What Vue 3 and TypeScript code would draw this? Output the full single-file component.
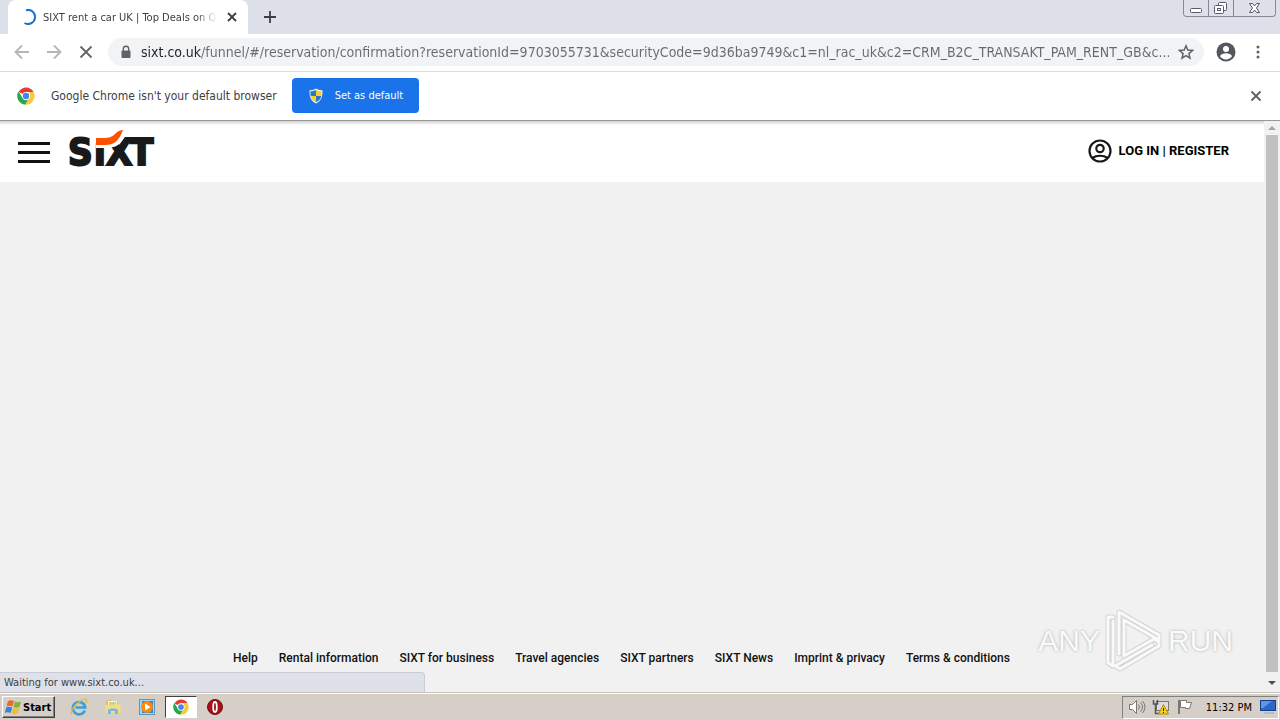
<script setup lang="ts">
import { ref } from 'vue'

const address = ref(
  'sixt.co.uk/funnel/#/reservation/confirmation?reservationId=9703055731&securityCode=9d36ba9749&c1=nl_rac_uk&c2=CRM_B2C_TRANSAKT_PAM_RENT_GB&c...',
)

const footerLinks: string[] = [
  'Help',
  'Rental information',
  'SIXT for business',
  'Travel agencies',
  'SIXT partners',
  'SIXT News',
  'Imprint & privacy',
  'Terms & conditions',
]
</script>

<template>
  <div class="desktop">
    <header class="tabstrip">
      <div class="tab">
        <svg class="spinner" width="16" height="16" viewBox="0 0 16 16" aria-hidden="true">
          <path d="M6 1.3A7 7 0 1 1 4.5 14" fill="none" stroke="#1a6fd0" stroke-width="2" />
        </svg>
        <span class="tab-title">SIXT rent a car UK | Top Deals on Qu</span>
        <button class="plain" aria-label="Close tab">
          <svg width="16" height="16" viewBox="0 0 16 16"><path d="M4 4l8 8M12 4l-8 8" stroke="#3c4043" stroke-width="1.8" /></svg>
        </button>
      </div>
      <button class="plain new-tab" aria-label="New tab">
        <svg width="16" height="16" viewBox="0 0 16 16"><path d="M8 2v12M2 8h12" stroke="#3c4043" stroke-width="1.8" /></svg>
      </button>
      <div class="window-controls">
        <button aria-label="Minimize">
          <svg width="24" height="16" viewBox="0 0 24 16"><rect x="6.500" y="8.500" width="11" height="4" rx="1" fill="#fff" stroke="#555a68" /></svg>
        </button>
        <button aria-label="Restore">
          <svg width="24" height="16" viewBox="0 0 24 16" fill="#fff" stroke="#555a68">
            <rect x="9.500" y="2.500" width="8" height="8" rx="1" />
            <rect x="5.500" y="5.500" width="9" height="8" rx="1" />
            <rect x="8.500" y="8.500" width="3" height="2" />
          </svg>
        </button>
        <button class="wide" aria-label="Close window">
          <svg width="41" height="16" viewBox="0 0 41 16">
            <path d="M15.500 3.500h3l2 2.500 2-2.500h3l-3 4.500 3 4.500h-3l-2-2.500-2 2.500h-3l3-4.500z" fill="#fff" stroke="#555a68" />
          </svg>
        </button>
      </div>
    </header>

    <nav class="toolbar" aria-label="Browser toolbar">
      <button class="plain" aria-label="Back">
        <svg width="16" height="16" viewBox="0 0 16 16"><path d="M15 8H2M8 1.500L1.500 8 8 14.500" fill="none" stroke="#b4b6b9" stroke-width="1.800" /></svg>
      </button>
      <button class="plain" aria-label="Forward">
        <svg width="16" height="16" viewBox="0 0 16 16"><path d="M1 8h13M8 1.500L14.500 8 8 14.500" fill="none" stroke="#b4b6b9" stroke-width="1.800" /></svg>
      </button>
      <button class="plain" aria-label="Stop loading">
        <svg width="16" height="16" viewBox="0 0 16 16"><path d="M2.500 2.500l11 11M13.500 2.500l-11 11" stroke="#5f6368" stroke-width="1.800" /></svg>
      </button>
      <div class="omnibox">
        <svg width="12" height="14" viewBox="0 0 12 14" aria-hidden="true">
          <path d="M3.300 6V4a2.700 2.700 0 0 1 5.400 0v2" fill="none" stroke="#5f6368" stroke-width="1.400" />
          <rect x="1.500" y="5.500" width="9" height="7.500" rx="1" fill="#5f6368" />
        </svg>
        <input v-model="address" type="text" aria-label="Address" spellcheck="false" />
        <button class="plain" aria-label="Bookmark this page">
          <svg width="16" height="16" viewBox="0 0 16 16"><path d="M8 1.800l1.800 4.300 4.700.4-3.600 3.100 1.100 4.600L8 11.700l-4 2.500 1.100-4.600L1.500 6.500l4.700-.4z" fill="none" stroke="#5f6368" stroke-width="1.500" /></svg>
        </button>
      </div>
      <button class="plain profile" aria-label="Profile">
        <svg width="20" height="20" viewBox="0 0 20 20">
          <circle cx="10" cy="10" r="9.500" fill="#54585d" />
          <circle cx="10" cy="7" r="3" fill="#fff" />
          <path d="M4 14.200c1-2.200 3.500-3 6-3s5 .8 6 3a7.200 7.200 0 0 1-12 0z" fill="#fff" />
        </svg>
      </button>
      <button class="plain" aria-label="Menu">
        <svg width="16" height="16" viewBox="0 0 16 16" fill="#5f6368"><circle cx="8" cy="3" r="1.500" /><circle cx="8" cy="8" r="1.500" /><circle cx="8" cy="13" r="1.500" /></svg>
      </button>
    </nav>

    <section class="infobar">
      <svg width="18" height="18" viewBox="0 0 48 48" aria-hidden="true">
        <path d="M24 24L4.500 12.500A23 23 0 0 1 44 13H24z" fill="#e33b2e" />
        <path d="M4 12a23 23 0 0 0 18 35l11-18-9-5-9 5z" fill="#2da44e" />
        <path d="M44 13a23 23 0 0 1-22 34l11-18V13z" fill="#fcc934" />
        <circle cx="24" cy="24" r="11" fill="#fff" />
        <circle cx="24" cy="24" r="8.500" fill="#4285f4" />
      </svg>
      <span class="message">Google Chrome isn't your default browser</span>
      <button class="default-button">
        <svg width="16" height="16" viewBox="0 0 16 16" aria-hidden="true">
          <path d="M8 .5c2 1.300 4 1.800 6.500 1.700C14.700 8 13.500 13 8 15.500 2.500 13 1.300 8 1.500 2.200 4 2.300 6 1.800 8 .5z" fill="#e8edf2" />
          <path d="M8 2v6H2.700a18 18 0 0 1-.2-4.700C4.500 3.300 6.500 3 8 2z" fill="#2977c9" />
          <path d="M8 2c1.500 1 3.500 1.300 5.500 1.300.1 1.700 0 3.200-.3 4.700H8z" fill="#f7cf35" />
          <path d="M2.700 8H8v6.300C5 12.800 3.300 11 2.700 8z" fill="#f7cf35" />
          <path d="M8 8h5.200c-.6 3-2.200 4.800-5.200 6.300z" fill="#2977c9" />
        </svg>
        <span>Set as default</span>
      </button>
      <button class="plain dismiss" aria-label="Dismiss">
        <svg width="16" height="16" viewBox="0 0 16 16"><path d="M3.500 3.500l9 9M12.500 3.500l-9 9" stroke="#5f6368" stroke-width="1.900" /></svg>
      </button>
    </section>

    <div class="viewport">
      <main class="page">
        <header class="site-header">
          <button class="plain" aria-label="Open menu">
            <svg width="32" height="22" viewBox="0 0 32 22" fill="#111"><path d="M0 0h32v3H0zM0 9h32v3H0zM0 18h32v3H0z" /></svg>
          </button>
          <a class="logo" href="#" aria-label="SIXT home">
            <svg width="88" height="38" viewBox="0 0 88 38">
              <g class="wordmark">
                <text x="-1" y="35">S</text>
                <text x="25" y="35">ı</text>
                <text x="37" y="35">X</text>
                <text x="61" y="35">T</text>
              </g>
              <path d="M27 0h34l-8 11c-4 5-9 7-15 7H27z" fill="#fff" />
              <path d="M27 8h7c6 0 9-1 12-4 3-3 5-4 8-4-4 11-9 15-18 15h-9z" fill="#ff5000" />
            </svg>
          </a>
          <a class="login" href="#">
            <svg width="24" height="24" viewBox="0 0 24 24" fill="none" stroke="#191919" stroke-width="2.200" aria-hidden="true">
              <circle cx="12" cy="12" r="10.500" />
              <circle cx="12" cy="9.500" r="3.700" />
              <path d="M4.500 19c4-3 11-3 15 0" />
            </svg>
            <span>LOG IN | REGISTER</span>
          </a>
        </header>
        <footer class="site-footer">
          <a v-for="link in footerLinks" :key="link" href="#">{{ link }}</a>
        </footer>
      </main>
      <div class="scrollbar" aria-hidden="true">
        <svg width="16" height="14" viewBox="0 0 16 14"><path d="M4 9l4-4 4 4z" fill="#a3a3a3" /></svg>
        <div class="thumb"></div>
        <svg width="16" height="20" viewBox="0 0 16 20"><path d="M4 9h8l-4 4z" fill="#505050" /></svg>
      </div>
      <div class="status">Waiting for www.sixt.co.uk...</div>
      <div class="watermark">
        <span>ANY</span>
        <svg width="60" height="66" viewBox="0 0 60 66" fill="none" stroke-linejoin="round" stroke-linecap="round" aria-hidden="true">
          <g stroke="#d4d4d4" stroke-width="5">
            <path d="M9 9H4v46l5 3V13" />
            <path d="M15 46V4l40 23v5L20 12v36l30-17 5 3v4L16 61l-5-3 37-21" />
          </g>
          <g stroke="#f9f9f9" stroke-width="3">
            <path d="M9 9H4v46l5 3V13" />
            <path d="M15 46V4l40 23v5L20 12v36l30-17 5 3v4L16 61l-5-3 37-21" />
          </g>
        </svg>
        <span>RUN</span>
      </div>
    </div>

    <footer class="taskbar">
      <button class="start">
        <svg width="17" height="16" viewBox="0 0 17 16" aria-hidden="true">
          <path d="M3 2c2-1 4-1 6 0L7.500 7.500c-2-1-4-1-6 0z" fill="#ee6a2c" />
          <path d="M10 2.500c2 1 4 1 6 0L14.500 8c-2 1-4 1-6 0z" fill="#7eb63c" />
          <path d="M1.200 8.500c2-1 4-1 6 0l-1.500 5.500c-2-1-4-1-6 0z" fill="#3a84c9" />
          <path d="M8.200 9c2 1 4 1 6 0l-1.500 5.500c-2 1-4 1-6 0z" fill="#f5bd2e" />
        </svg>
        <span>Start</span>
      </button>
      <div class="launch">
        <button class="plain" aria-label="Internet Explorer">
          <svg width="18" height="18" viewBox="0 0 18 18" fill="none">
            <path d="M14.800 12.500A6.200 6.200 0 1 1 15.200 9.500H5.500" stroke="#3aa0dd" stroke-width="2.600" />
            <path d="M2 16.500C-1 14 6 5 12 2c4-2 6 0 4 3" stroke="#e8b83a" stroke-width="1.300" />
          </svg>
        </button>
        <button class="plain" aria-label="Explorer">
          <svg width="18" height="18" viewBox="0 0 18 18">
            <path d="M2 3l5-1 1 1h6v11H2z" fill="#e3bd54" /><path d="M4 3h9v7H4z" fill="#faf5d9" /><path d="M5 5h7M5 7h7" stroke="#81b45c" />
            <path d="M1 7l15-1 1 9H2z" fill="#f5dc83" /><path d="M4 16v-4c0-2 10-2 10 0v4h-3v-3H7v3z" fill="#77b9e4" />
          </svg>
        </button>
        <button class="plain" aria-label="Media Player">
          <svg width="18" height="18" viewBox="0 0 18 18">
            <rect x="1.500" y="1.500" width="15" height="15" fill="#a9d4f0" stroke="#5797c8" /><rect x="4" y="3" width="11" height="12" fill="#3f83bd" />
            <circle cx="9" cy="9" r="6" fill="#f38b18" /><path d="M7 5.500v7l5.500-3.500z" fill="#fff" />
          </svg>
        </button>
        <button class="plain active" aria-label="Google Chrome">
          <svg width="16" height="16" viewBox="0 0 48 48">
            <path d="M24 24L4.500 12.500A23 23 0 0 1 44 13H24z" fill="#e33b2e" />
            <path d="M4 12a23 23 0 0 0 18 35l11-18-9-5-9 5z" fill="#2da44e" />
            <path d="M44 13a23 23 0 0 1-22 34l11-18V13z" fill="#fcc934" />
            <circle cx="24" cy="24" r="11" fill="#fff" /><circle cx="24" cy="24" r="8.500" fill="#4285f4" />
          </svg>
        </button>
        <button class="plain" aria-label="Opera">
          <svg width="18" height="18" viewBox="0 0 18 18"><circle cx="9" cy="9" r="7.500" fill="#a80f16" stroke="#6d1115" /><ellipse cx="9" cy="9" rx="1.800" ry="5" fill="#8d1015" stroke="#fff" stroke-width="1.800" /></svg>
        </button>
      </div>
      <div class="tray">
        <svg width="18" height="16" viewBox="0 0 18 16" aria-label="Volume">
          <path d="M1.500 5.500h3l4-4v13l-4-4h-3z" fill="#fff" stroke="#777" /><path d="M10.500 5.500q2 2.500 0 5M12.500 3.500q4 4.500 0 9M14.500 2q5 6 0 12" fill="none" stroke="#777" />
        </svg>
        <svg width="18" height="16" viewBox="0 0 18 16" aria-label="Network">
          <rect x="4.500" y="2.500" width="12" height="9" fill="#ddd" stroke="#777" /><path d="M1.500 1v4h4V1M3.500 5v9.500h4" fill="none" stroke="#555" stroke-width="1.500" />
          <path d="M11.500 5.500l5 9.500h-10z" fill="#f6cf1f" stroke="#b48b00" /><path d="M11.500 9v3M11.500 13v1" stroke="#222" />
        </svg>
        <svg width="18" height="16" viewBox="0 0 18 16" aria-label="Action center">
          <path d="M4.500 1.500h6v2h5l-2 6h-4v-1h-5z" fill="#fff" stroke="#777" /><path d="M3 1v14" stroke="#777" stroke-width="2" />
        </svg>
        <time>11:32 PM</time>
        <svg width="16" height="16" viewBox="0 0 16 16" aria-label="Show desktop">
          <rect x=".5" y="1.500" width="15" height="10" fill="#2967c9" stroke="#173f87" /><path d="M1 2h11L3 9H1z" fill="#5b98e8" /><path d="M4 13h10v2H4z" fill="#b2bdcb" />
        </svg>
      </div>
    </footer>
  </div>
</template>

<style>
html,
body {
  overflow: hidden;
}
</style>

<style scoped>
* {
  box-sizing: border-box;
}
.desktop {
  display: flex;
  flex-direction: column;
  height: 100vh;
  color: #3c4043;
  font: 12px "DejaVu Sans Condensed", "DejaVu Sans", sans-serif;
  background: #fff;
}
svg {
  display: block;
  flex: none;
}
a {
  color: inherit;
  text-decoration: none;
}
button {
  font: inherit;
}
.plain {
  display: flex;
  padding: 0;
  border: 0;
  background: none;
}
.tabstrip {
  display: flex;
  height: 34px;
  padding-left: 8px;
  background: #dee1e9;
}
.tab {
  display: flex;
  align-items: center;
  gap: 7px;
  width: 240px;
  padding: 0 8px 0 12px;
  border-radius: 8px 8px 0 0;
  background: #fff;
}
.tab-title {
  flex: 1;
  min-width: 0;
  font-size: 11px;
  white-space: nowrap;
  mask-image: linear-gradient(90deg, #000 88%, transparent);
}
.new-tab {
  margin-left: 14px;
  align-self: center;
}
.window-controls {
  display: flex;
  height: 17px;
  margin: 0 4px 0 auto;
  border: 1px solid #858995;
  border-top: 0;
  border-radius: 0 0 4px 4px;
}
.window-controls button {
  padding: 0;
  border: 0;
  background: #dee1e9;
}
.window-controls button + button {
  border-left: 1px solid #858995;
}
.window-controls button:first-child {
  border-radius: 0 0 0 4px;
}
.window-controls button:last-child {
  border-radius: 0 0 4px 0;
}
.toolbar {
  display: flex;
  align-items: center;
  gap: 16px;
  height: 38px;
  padding: 0 14px 2px;
  border-bottom: 1px solid #dcdcdc;
}
.omnibox {
  display: flex;
  flex: 1;
  align-items: center;
  gap: 9px;
  height: 28px;
  margin-right: -4px;
  margin-left: -2px;
  padding: 0 10px 0 12px;
  border-radius: 14px;
  background: #f1f3f4;
}
.omnibox input {
  flex: 1;
  min-width: 0;
  padding: 0;
  border: 0;
  color: transparent;
  font: 14px "DejaVu Sans Condensed", "DejaVu Sans", sans-serif;
  background: linear-gradient(90deg, #202124 60px, #676b70 60px);
  background-clip: text;
}
.profile {
  margin-right: -2px;
}
.infobar {
  display: flex;
  align-items: center;
  height: 49px;
  padding: 0 16px 1px 17px;
  border-bottom: 1px solid #999;
}
.message {
  margin: 0 15px 0 16px;
}
.default-button {
  display: flex;
  align-items: center;
  gap: 11px;
  height: 35px;
  padding: 0 16px;
  border: 0;
  border-radius: 4px;
  color: #fff;
  font-size: 11px;
  background: #1a73e8;
}
.dismiss {
  margin-left: auto;
}
.viewport {
  position: relative;
  display: flex;
  flex: 1;
  min-height: 0;
}
.page {
  display: flex;
  flex: 1;
  flex-direction: column;
  background: #f1f1f1;
  font-family: Roboto, sans-serif;
}
.site-header {
  display: flex;
  align-items: center;
  height: 61px;
  padding: 0 35px 0 18px;
  background: linear-gradient(#cfcfcf, #fff 4px);
}
.site-header > button {
  padding-top: 2px;
}
.logo {
  margin: -6px 0 0 19px;
}
.logo svg {
  overflow: visible;
}
.wordmark {
  fill: #191919;
  stroke: #191919;
  stroke-width: 2px;
  font: bold 38px "DejaVu Sans Condensed", "DejaVu Sans", sans-serif;
}
.login {
  display: flex;
  align-items: center;
  gap: 7px;
  margin-left: auto;
  padding-bottom: 2px;
  color: #000;
  font-size: 13px;
  font-weight: 700;
}
.site-footer {
  display: flex;
  justify-content: center;
  gap: 21px;
  margin-top: auto;
  padding: 0 21px 26px 0;
  color: #111;
  font-size: 12px;
  font-weight: 500;
  line-height: 16px;
}
.scrollbar {
  display: flex;
  flex-direction: column;
  width: 16px;
  background: #f1f1f1;
}
.thumb {
  flex: 1;
  margin: 0 2px;
  background: #c1c1c1;
}
.status {
  position: absolute;
  bottom: 0;
  left: 0;
  width: 425px;
  height: 20px;
  padding-left: 4px;
  border: 1px solid #c9ccd2;
  border-width: 1px 1px 0 0;
  border-radius: 0 4px 0 0;
  font-size: 11px;
  line-height: 20px;
  background: #dee1e9;
}
.watermark {
  position: absolute;
  right: 47px;
  bottom: 18px;
  display: flex;
  align-items: center;
  gap: 4px;
  color: #fafafa;
  font: 30px "Liberation Sans", sans-serif;
  text-shadow: 0 0 3px #aaa;
}
.taskbar {
  display: flex;
  align-items: center;
  height: 28px;
  padding: 1px 1px 0 2px;
  border-top: 1px solid #c8c4bc;
  box-shadow: inset 0 1px #fff;
  background: #d6cfc7;
}
.start {
  display: flex;
  align-items: center;
  gap: 1px;
  width: 53px;
  height: 22px;
  padding: 0 2px;
  border: 1px solid;
  border-color: #fff #404040 #404040 #fff;
  box-shadow: inset -1px -1px #808080;
  color: #000;
  font-size: 11px;
  font-weight: 700;
  background: #d6cfc7;
}
.launch {
  display: flex;
  align-items: center;
  gap: 16px;
  margin-left: 15px;
}
.active {
  align-items: center;
  justify-content: center;
  width: 32px;
  height: 22px;
  margin: 0 -7px;
  border: 1px solid;
  border-color: #404040 #fff #fff #404040;
  background: #fff;
}
.tray {
  display: flex;
  align-items: center;
  gap: 6px;
  height: 23px;
  margin-left: auto;
  padding: 0 2px 0 5px;
  border: 1px solid;
  border-color: #808080 #fff #fff #808080;
}
.tray time {
  margin: 0 2px 0 6px;
  color: #000;
  font-size: 11px;
}
</style>
